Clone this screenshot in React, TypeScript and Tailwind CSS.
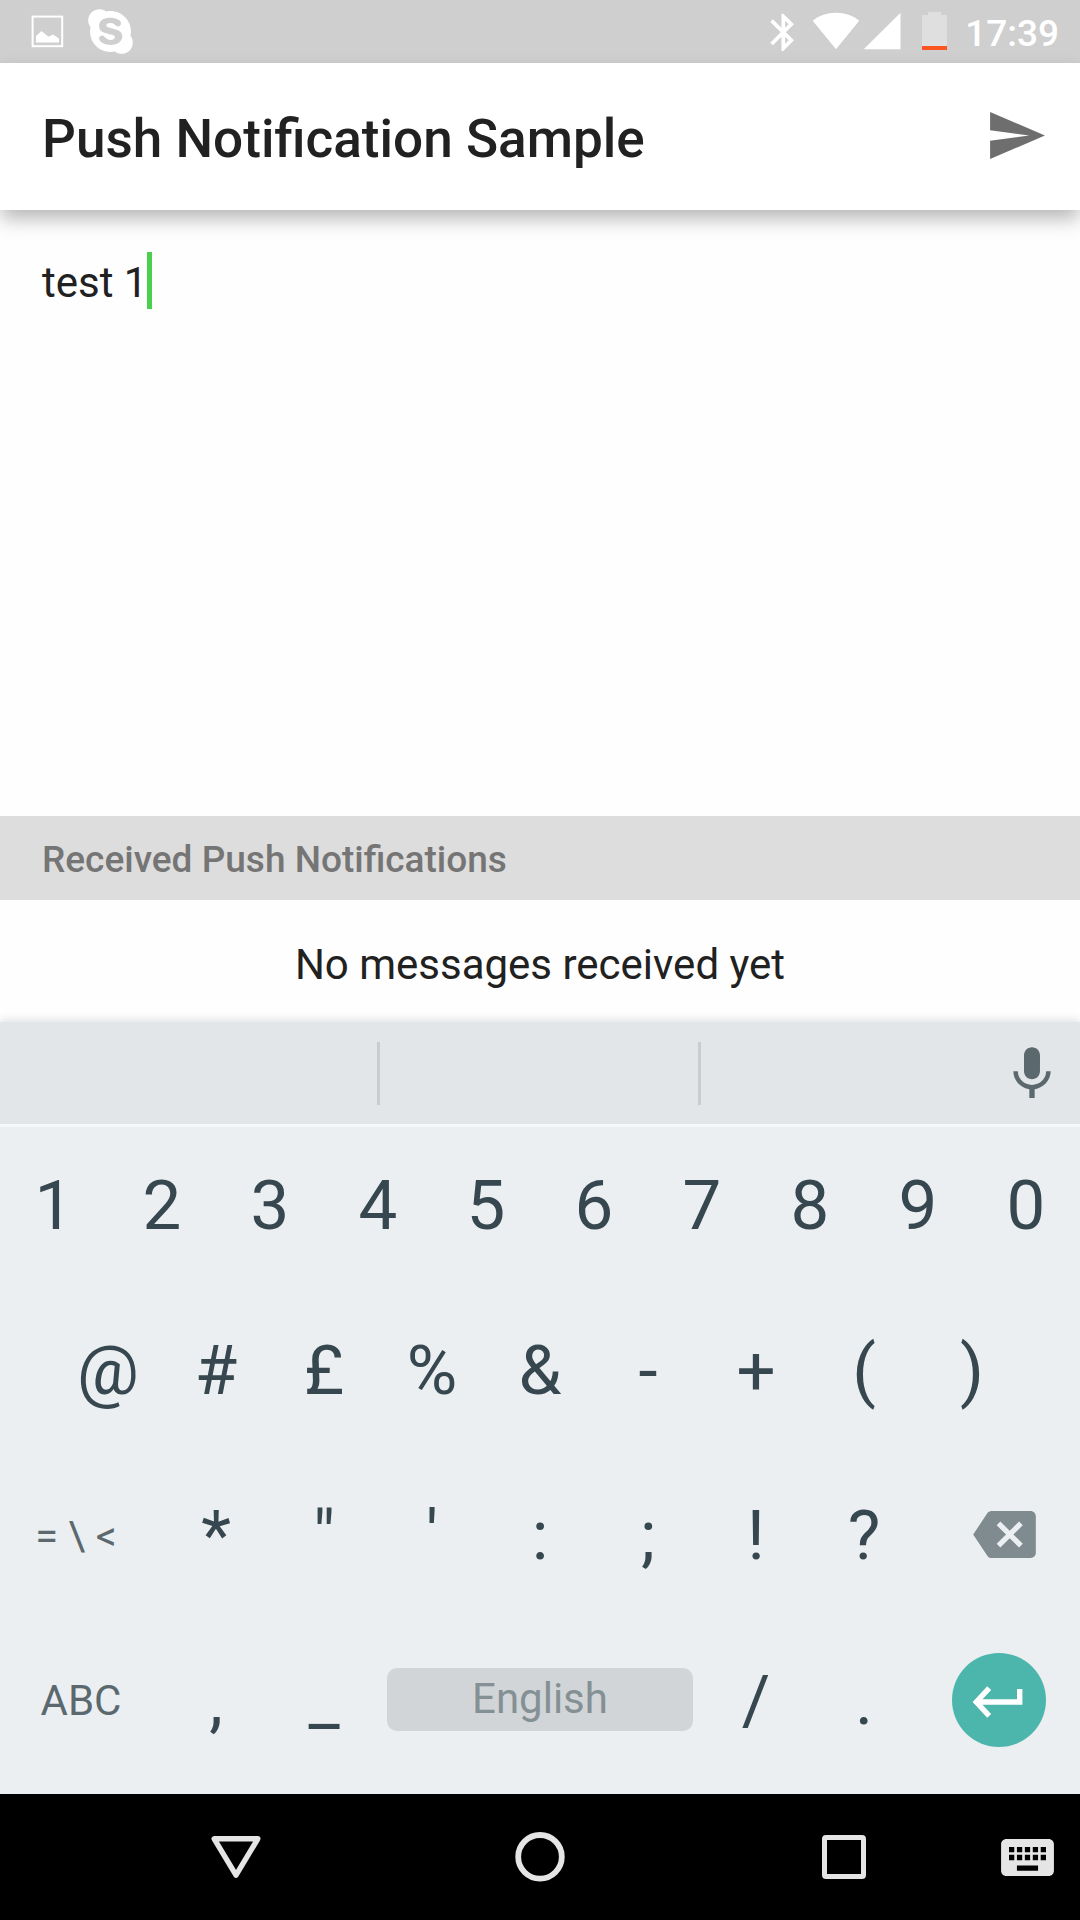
import React from "react";
import { FaSkype } from "react-icons/fa";

function StatusBar() {
  return (
    <div className="flex h-[63px] shrink-0 items-start bg-[#cfcfcf] text-white">
      <svg className="mt-[15px] ml-[31px] h-[33px] w-[33px]" viewBox="0 0 33 33" fill="none">
        <rect x="1.6" y="1.6" width="29.6" height="29.6" stroke="white" strokeWidth="2" />
        <path d="M5 27.5V21l5.5-5 7 5.8 4.5-2.3 6 4v4z" fill="white" />
      </svg>
      <FaSkype className="mt-[6px] ml-[24px] h-[51px] w-[45px]" />
      <div className="flex-1" />
      <svg className="mt-[9.6px] h-[44.6px] w-[44.6px]" viewBox="0 0 24 24" fill="white">
        <path d="M17.71 7.71L12 2h-1v7.59L6.41 5 5 6.41 10.59 12 5 17.59 6.41 19 11 14.41V22h1l5.71-5.71-4.3-4.29 4.3-4.29zM13 5.83l1.88 1.88L13 9.59V5.83zm1.88 10.46L13 18.17v-3.76l1.88 1.88z" />
      </svg>
      <svg className="mt-[12px] ml-[6.7px] h-[38px] w-[48px]" viewBox="0 0 48 38" fill="white">
        <path d="M24 37.3L.7 8.8C7 3.5 15 .7 24 .7s17 2.8 23.2 8.1z" />
      </svg>
      <svg className="mt-[12px] ml-[3px] h-[38px] w-[38px]" viewBox="0 0 38 38" fill="white">
        <path d="M.7 37.3L37.5.7v36.6z" />
      </svg>
      <svg className="mt-[12px] ml-[21px] h-[38px] w-[25px]" viewBox="0 0 25 38">
        <path d="M0 3h6V0h13v3h6v31H0z" fill="#dfdfdf" />
        <path d="M0 34h25v4H0z" fill="#fb5622" />
      </svg>
      <span className="mt-[14px] mr-[21px] ml-[18px] text-[37px] leading-[40px] font-medium">17:39</span>
    </div>
  );
}

function Header() {
  return (
    <header className="relative z-10 flex h-[147px] shrink-0 items-center bg-white pr-[35px] pl-[42px] shadow-[0_10px_18px_-1px_rgba(0,0,0,0.28)]">
      <h1 className="flex-1 pt-[4px] text-[53.1px] leading-[64px] font-medium text-[#212121]">Push Notification Sample</h1>
      <svg className="mb-[2px] h-[47px] w-[55px]" viewBox="2 3 21 18" fill="#6e6e6e">
        <path d="M2.01 21L23 12 2.01 3 2 10l15 2-15 2z" />
      </svg>
    </header>
  );
}

function Key({ label }: { label: string }) {
  return (
    <button className="flex w-[108px] items-center justify-center text-[69px] leading-[80px] text-[#37474f]">{label}</button>
  );
}

function Keys({ labels }: { labels: string[] }) {
  return (
    <>
      {labels.map((l) => (
        <Key key={l} label={l} />
      ))}
    </>
  );
}

function Keyboard() {
  return (
    <div className="relative flex h-[772px] shrink-0 flex-col bg-[#ebeff2] shadow-[0_-2px_9px_rgba(0,0,0,0.12)]">
      <div className="flex h-[105px] shrink-0 items-start border-b-[3px] border-[#f5f7f8] bg-[#e2e6e9]">
        <div className="mt-[20px] ml-[377px] h-[63px] w-[3px] bg-[#c9cdd0]" />
        <div className="mt-[20px] ml-[318px] h-[63px] w-[3px] bg-[#c9cdd0]" />
        <svg className="mt-[20px] ml-[299px] h-[64px] w-[64px]" viewBox="0 0 24 24" fill="#5b696f">
          <path d="M12 14c1.66 0 2.99-1.34 2.99-3L15 5c0-1.66-1.34-3-3-3S9 3.34 9 5v6c0 1.66 1.34 3 3 3zm5.3-3c0 3-2.54 5.1-5.3 5.1S6.7 14 6.7 11H5c0 3.41 2.72 6.23 6 6.72V21h2v-3.28c3.28-.48 6-3.3 6-6.72h-1.7z" />
        </svg>
      </div>
      <div className="flex h-[161px] pb-[4px]">
        <Keys labels={["1", "2", "3", "4", "5", "6", "7", "8", "9", "0"]} />
      </div>
      <div className="flex h-[165px] justify-center">
        <Keys labels={["@", "#", "£", "%", "&", "-", "+", "(", ")"]} />
      </div>
      <div className="flex h-[165px]">
        <button className="w-[162px] pr-[10px] text-center text-[41.5px] leading-[50px] text-[#5b696f]">{"= \\ <"}</button>
        <Keys labels={["*", '"', "'", ":", ";", "!", "?"]} />
        <button className="flex w-[162px] items-center justify-center pl-[11px]">
          <svg className="mb-[3px] h-[47px] w-[63px]" viewBox="0 3 24 18" fill="#808b8f">
            <path d="M22 3H7c-.69 0-1.23.35-1.59.88L0 12l5.41 8.11c.36.53.9.89 1.59.89h15c1.1 0 2-.9 2-2V5c0-1.1-.9-2-2-2zm-3 12.59L17.59 17 14 13.41 10.41 17 9 15.59 12.59 12 9 8.41 10.41 7 14 10.59 17.59 7 19 8.41 15.41 12 19 15.59z" />
          </svg>
        </button>
      </div>
      <div className="flex h-[165px]">
        <button className="w-[162px] text-center text-[42px] leading-[50px] text-[#5b696f]">ABC</button>
        <Keys labels={[",", "_"]} />
        <div className="flex w-[324px] items-center justify-center">
          <button className="mb-[2px] h-[63px] w-[306px] rounded-[10px] bg-[#d1d5d8] pb-[2px] text-[42px] leading-[50px] text-[#849094]">English</button>
        </div>
        <Keys labels={["/", "."]} />
        <div className="flex w-[162px] items-center justify-center">
          <button className="mb-[1px] h-[94px] w-[94px] rounded-full bg-[#4db6ac]">
            <svg className="h-[94px] w-[94px]" viewBox="0 0 94 94" fill="none" stroke="white" strokeWidth="5.4">
              <path d="M67.7 36V49H24M37.2 35.2L24.3 49l12.9 13.8" />
            </svg>
          </button>
        </div>
      </div>
    </div>
  );
}

function NavBar() {
  return (
    <nav className="flex h-[126px] shrink-0 items-start bg-black">
      <svg className="mt-[41px] ml-[210px] h-[44px] w-[52px]" viewBox="0 0 52 44" fill="none">
        <path d="M4.2 3.8H47.8L26 40.2z" stroke="#e5e5e5" strokeWidth="5.4" strokeLinejoin="round" />
      </svg>
      <svg className="mt-[37px] ml-[252px] h-[52px] w-[52px]" viewBox="0 0 52 52" fill="none">
        <circle cx="26" cy="25.8" r="21.8" stroke="#e5e5e5" strokeWidth="5.8" />
      </svg>
      <div className="mt-[41px] ml-[256px] h-[44px] w-[44px] rounded-[4px] border-[5px] border-[#e5e5e5]" />
      <svg className="mt-[45px] ml-[135px] h-[37px] w-[53px]" viewBox="2 5 20 14" fill="#e5e5e5">
        <path d="M20 5H4c-1.1 0-1.99.9-1.99 2L2 17c0 1.1.9 2 2 2h16c1.1 0 2-.9 2-2V7c0-1.1-.9-2-2-2zm-9 3h2v2h-2V8zm0 3h2v2h-2v-2zM8 8h2v2H8V8zm0 3h2v2H8v-2zm-1 2H5v-2h2v2zm0-3H5V8h2v2zm9 7H8v-2h8v2zm0-4h-2v-2h2v2zm0-3h-2V8h2v2zm3 3h-2v-2h2v2zm0-3h-2V8h2v2z" />
      </svg>
    </nav>
  );
}

export default function App() {
  return (
    <div className="flex h-[1920px] w-[1080px] flex-col overflow-hidden bg-[#fefefe] font-['Roboto',sans-serif]">
      <StatusBar />
      <Header />
      <div className="flex h-[606px] shrink-0 items-start pt-[42px] pl-[42px]">
        <span className="mt-[6px] text-[42px] leading-[50px] text-[#212121]">test 1</span>
        <span className="h-[57px] w-[5px] bg-[#4bd04e]" />
      </div>
      <h2 className="flex h-[84px] shrink-0 items-center bg-[#dddddd] pt-[3px] pl-[42px] text-[37px] leading-[42px] font-medium text-[#757575]">
        Received Push Notifications
      </h2>
      <p className="h-[122px] shrink-0 pt-[40px] text-center text-[42px] leading-[50px] text-[#212121]">No messages received yet</p>
      <Keyboard />
      <NavBar />
    </div>
  );
}
